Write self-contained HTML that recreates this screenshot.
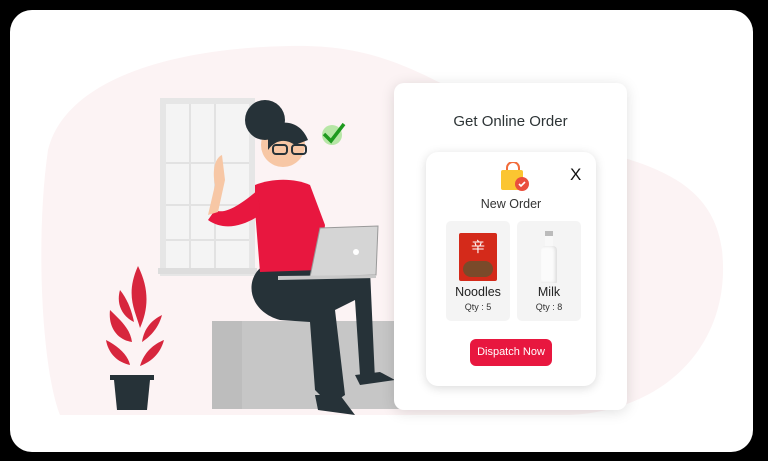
<!DOCTYPE html>
<html><head><style>
body{margin:0;width:768px;height:461px;background:#000;overflow:hidden;font-family:"Liberation Sans",sans-serif;position:relative}
.frame{position:absolute;left:10px;top:10px;width:743px;height:442px;background:#fff;border-radius:22px;overflow:hidden}
.card{position:absolute;left:384px;top:73px;width:233px;height:327px;background:#fff;border-radius:10px;box-shadow:0 2px 14px rgba(0,0,0,.13)}
.title{position:absolute;left:0;right:0;top:30px;text-align:center;font-size:15px;color:#2d3436}
.inner{position:absolute;left:32px;top:69px;width:170px;height:234px;background:#fff;border-radius:12px;box-shadow:0 2px 10px rgba(0,0,0,.15)}
.x{position:absolute;left:144px;top:13px;font-size:17px;color:#111}
.no{position:absolute;left:0;right:0;top:45px;text-align:center;font-size:12.5px;color:#333}
.item{position:absolute;top:69px;width:64px;height:100px;background:#f4f4f4;border-radius:5px;text-align:center}
.item b{font-weight:normal;position:absolute;left:0;right:0;top:64px;font-size:12.5px;color:#222}
.item i{font-style:normal;position:absolute;left:0;right:0;top:81px;font-size:9px;color:#333}
.btn{position:absolute;left:44px;top:187px;width:82px;height:27px;background:#e8173f;border-radius:6px;color:#fff;font-size:11px;line-height:27px;text-align:center}
</style></head><body>
<div class="frame">
<svg width="743" height="442" style="position:absolute;left:0;top:0">
<path d="M38 140 C55 70 160 38 280 36 C380 34 420 70 520 120 C600 150 700 150 712 240 C722 330 660 400 560 405 L50 405 C32 360 25 230 38 140Z" fill="#fcf3f4"/>
<rect x="150" y="88" width="95" height="178" fill="#e6e6e6"/>
<rect x="156" y="94" width="83" height="166" fill="#f4f4f4"/>
<g stroke="#e2e2e2" stroke-width="2"><line x1="180" y1="94" x2="180" y2="260"/><line x1="205" y1="94" x2="205" y2="260"/><line x1="156" y1="153" x2="239" y2="153"/><line x1="156" y1="195" x2="239" y2="195"/><line x1="156" y1="230" x2="239" y2="230"/></g>
<rect x="148" y="258" width="99" height="6" fill="#ddd"/>
<g fill="#d7263d"><path d="M128 256 C115 285 125 300 130 318 C138 300 140 280 128 256Z"/><path d="M100 300 C110 310 120 318 122 332 C108 330 98 318 100 300Z"/><path d="M152 305 C148 320 138 328 132 332 C134 318 142 310 152 305Z"/><path d="M96 330 C108 336 118 345 120 355 C106 352 98 342 96 330Z"/><path d="M154 330 C150 345 140 352 130 356 C134 342 144 334 154 330Z"/><path d="M110 280 C118 290 122 302 124 312 C112 306 106 294 110 280Z"/></g>
<rect x="100" y="365" width="44" height="5" fill="#263238"/><path d="M104 370 H140 L137 400 H107Z" fill="#263238"/>
<rect x="202" y="311" width="202" height="88" rx="3" fill="#c6c6c6"/>
<rect x="202" y="311" width="30" height="88" fill="#bdbdbd"/>
<path d="M255 255 C235 265 235 300 270 310 L300 312 L305 380 L320 395 L335 385 L325 300 L345 290 L350 365 L365 370 L360 260 Z" fill="#263238"/>
<path d="M305 385 L330 385 L345 405 L308 400Z" fill="#263238"/><path d="M345 365 L370 362 L385 370 L350 375Z" fill="#263238"/>
<path d="M245 175 C262 168 285 168 300 175 L315 215 L310 260 L250 262 L245 200Z" fill="#e8173f"/>
<path d="M248 180 C230 195 215 205 205 200 L198 210 C215 222 235 215 250 205Z" fill="#e8173f"/>
<path d="M205 175 C202 160 205 148 212 145 L215 170 L208 202 L198 205Z" fill="#f7c7a5"/>
<circle cx="273" cy="135" r="22" fill="#f7c7a5"/>
<circle cx="255" cy="110" r="20" fill="#263238"/><path d="M258 120 C270 108 290 110 298 130 L285 135 C275 128 265 130 258 140Z" fill="#263238"/>
<rect x="263" y="135" width="14" height="9" rx="3" fill="none" stroke="#263238" stroke-width="2"/><rect x="282" y="135" width="14" height="9" rx="3" fill="none" stroke="#263238" stroke-width="2"/>
<path d="M310 218 L368 216 L366 265 L300 267Z" fill="#d5d5d5" stroke="#999" stroke-width="1"/>
<path d="M268 266 L366 265 L366 268 L268 270Z" fill="#c8c8c8"/>
<circle cx="346" cy="242" r="3" fill="#fff"/>
<circle cx="322" cy="125" r="10" fill="#b7e6a6"/><path d="M314 124 L321 131 L334 114" fill="none" stroke="#1f9a1f" stroke-width="3.5"/>
</svg>
<div class="card">
<div class="title">Get Online Order</div>
<div class="inner">
<svg width="30" height="30" style="position:absolute;left:73px;top:10px"><path d="M8 10 V6 a6 6 0 0 1 12 0 V10" fill="none" stroke="#f26b3a" stroke-width="2"/><rect x="2" y="8" width="22" height="20" rx="2" fill="#fbc531"/><circle cx="23" cy="22" r="7" fill="#ea4e3d"/><path d="M20 22 l2 2 l4 -4" stroke="#fff" stroke-width="1.6" fill="none"/></svg>
<div class="x">X</div>
<div class="no">New Order</div>
<div class="item" style="left:20px"><div style="position:absolute;left:13px;top:12px;width:38px;height:48px;background:#d42a1a;border-radius:2px"><div style="position:absolute;left:4px;top:28px;width:30px;height:16px;background:#7a4a2a;border-radius:8px"></div><div style="color:#fff;font-size:14px;margin-top:4px;font-family:'Noto Sans CJK SC',sans-serif">辛</div></div><b>Noodles</b><i>Qty : 5</i></div>
<div class="item" style="left:91px"><div style="position:absolute;left:24px;top:10px;width:16px;height:52px;"><div style="width:8px;height:5px;margin:0 auto;background:#bbb"></div><div style="width:8px;height:10px;margin:0 auto;background:#f8f8f8"></div><div style="width:16px;height:37px;background:#fbfbfb;border-radius:4px 4px 1px 1px;box-shadow:inset -2px 0 3px #ddd"></div></div><b>Milk</b><i>Qty : 8</i></div>
<div class="btn">Dispatch Now</div>
</div>
</div>
</div>
</body></html>
